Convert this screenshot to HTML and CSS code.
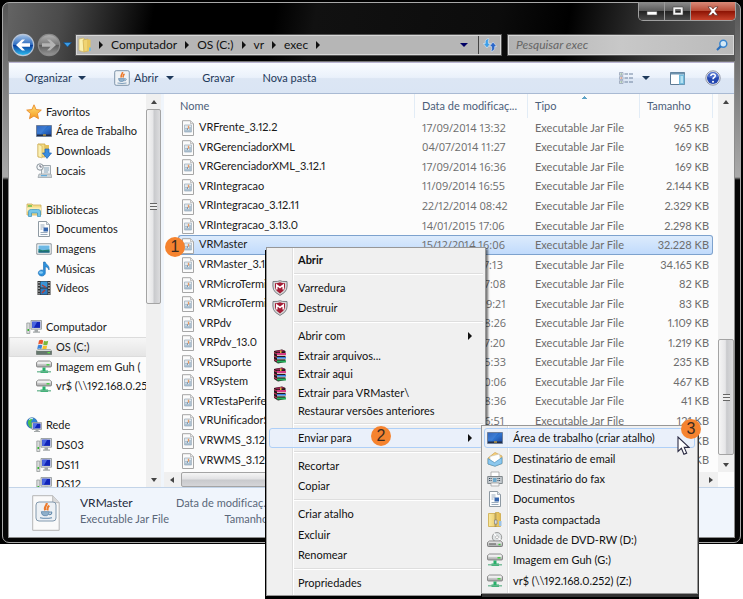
FILE: index.html
```html
<!DOCTYPE html>
<html lang="pt-BR">
<head>
<meta charset="utf-8">
<meta name="viewport" content="width=device-width, initial-scale=1">
<title>exec</title>
<link rel="stylesheet" href="styles.css">
</head>
<body>
<svg class="defs" aria-hidden="true">
  <defs>
    <linearGradient id="gBlue" x1="0" y1="0" x2="0" y2="1"><stop offset="0" stop-color="#a9c6e8"/><stop offset=".48" stop-color="#2d6cc0"/><stop offset=".52" stop-color="#0a3f9e"/><stop offset="1" stop-color="#2fc3f5"/></linearGradient>
    <linearGradient id="gGrey" x1="0" y1="0" x2="0" y2="1"><stop offset="0" stop-color="#b4b4b4"/><stop offset=".5" stop-color="#777"/><stop offset=".52" stop-color="#5c5c5c"/><stop offset="1" stop-color="#9a9a9a"/></linearGradient>
    <linearGradient id="gFold" x1="0" y1="0" x2="1" y2="0"><stop offset="0" stop-color="#f9eaa0"/><stop offset="1" stop-color="#e2b94e"/></linearGradient>
    <linearGradient id="gScr" x1="0" y1="0" x2="1" y2="1"><stop offset="0" stop-color="#14378f"/><stop offset=".5" stop-color="#2f74cf"/><stop offset="1" stop-color="#1a3f93"/></linearGradient>
    <linearGradient id="gStar" x1="0" y1="0" x2="0" y2="1"><stop offset="0" stop-color="#ffe27a"/><stop offset="1" stop-color="#f59a1d"/></linearGradient>
    <linearGradient id="gDrv" x1="0" y1="0" x2="0" y2="1"><stop offset="0" stop-color="#f4f4f4"/><stop offset="1" stop-color="#a4a6a6"/></linearGradient>
  </defs>
  <symbol id="star" viewBox="0 0 16 16"><path d="M8 .8l2.1 4.8 5.2.5-3.9 3.5 1.1 5.1L8 12l-4.500 2.700 1.100-5.100L.7 6.100l5.200-.5z" fill="url(#gStar)" stroke="#e98a2a" stroke-width=".9"/></symbol>
  <symbol id="desk" viewBox="0 0 16 16"><path d="M.5 2.500h15v11H.5z" fill="url(#gScr)" stroke="#6e7f9a"/><path d="M1 3h10.500L5 10.500H1z" fill="#4d8ce0" opacity=".55"/><path d="M1 11.500h14v1.500H1z" fill="#222d46"/><path d="M7 11.500h3v1H7z" fill="#ffc533"/></symbol>
  <symbol id="down" viewBox="0 0 16 16"><path d="M2 1h7v13H2z" fill="#f4dc84" stroke="#caa445" stroke-width=".8"/><path d="M2 1l4 2v12l-4-1.500z" fill="#fbf0b4" stroke="#cfae55" stroke-width=".6"/><path d="M9 2h4v11H9z" fill="#e5c25d"/><path d="M9 6h4v4h2.500L11 15.400 6.500 10H9z" fill="#3a8ee0" stroke="#1d62b3" stroke-width=".7"/></symbol>
  <symbol id="places" viewBox="0 0 16 16"><path d="M5.500 2.500h9v9h-9z" fill="#eceff1" stroke="#a1a9af"/><path d="M8 5h5M8 7h5M8 9h4" stroke="#8ba8bc"/><path d="M3 11h12l.8 3.500H2z" fill="#cdd4d8" stroke="#98a1a6" stroke-width=".7"/><circle cx="4" cy="4" r="3.200" fill="#f4f7f9" stroke="#8b959c"/><path d="M4 2v2h1.800" fill="none" stroke="#667"/><path d="M5 12.700h6" stroke="#4aa3dc"/></symbol>
  <symbol id="lib" viewBox="0 0 16 16"><path d="M1 2h5l1 1h8v10H1z" fill="#f5dd88" stroke="#ccaf5d" stroke-width=".8"/><path d="M2 3h4v2H2z" fill="#8cc35b"/><path d="M1 5.500h14v4H1z" fill="#fbeeb4"/><path d="M2.500 14.500V10c0-2 1-2.500 3-2.500h6c2 0 3 .5 3 2.500v4.500h-3V11h-6v3.500z" fill="#76c6e8" stroke="#3a92bd" stroke-width=".7"/></symbol>
  <symbol id="doc" viewBox="0 0 16 16"><path d="M2.500.5h8l3 3v12h-11z" fill="#fcfdfd" stroke="#8f9aa3"/><path d="M10.500.5v3h3" fill="#dfe6ea" stroke="#8f9aa3" stroke-width=".7"/><path d="M4.500 4h4M4.500 6h4M4.500 8h2M4.500 11.500h7M4.500 13.500h7" stroke="#9bacbd"/><path d="M7.500 6.500h4.500v4H7.500z" fill="#3465ad"/></symbol>
  <symbol id="img" viewBox="0 0 16 16"><path d="M.8 2.800h14.400v10.400H.8z" fill="#fff" stroke="#8b949b"/><path d="M2.500 4.500h11v7h-11z" fill="#6db8e4"/><path d="M2.500 8l4 1.200 7-.7v3h-11z" fill="#24806f"/><path d="M2.500 10.500h11v1h-11z" fill="#1b5a88"/></symbol>
  <symbol id="music" viewBox="0 0 16 16"><path d="M7.500 1h1.700c.5 2.500 4.800 3.500 3.800 8-.6-2-2-3-3.700-3.300V12a3.500 3 0 1 1-1.800-2.600z" fill="#2d92dc" stroke="#1767ae" stroke-width=".6"/><ellipse cx="5" cy="11.500" rx="2" ry="1.300" fill="#86cbf5"/></symbol>
  <symbol id="video" viewBox="0 0 16 16"><path d="M1.500 1h13v14h-13z" fill="#333"/><path d="M4.500 1.500h7v6h-7z" fill="#3a95d6"/><path d="M4.500 8.500h7v6h-7z" fill="#2e7bc0"/><path d="M3 2v13M13 2v13" stroke="#cfd4d6" stroke-width="1.300" stroke-dasharray="1.300 1.500"/><path d="M6 5l4 2.500M6 13l3-3" stroke="#b33d35" stroke-width="1.400"/></symbol>
  <symbol id="pc" viewBox="0 0 16 16"><path d="M.8 4h3v10.500h-3z" fill="#d9dcdc" stroke="#8b9090" stroke-width=".7"/><path d="M1.500 10h1.500v2H1.500z" fill="#35b52d"/><path d="M5 1.500h10.500v8.700H5z" fill="#dcdfe0" stroke="#8c9294" stroke-width=".8"/><path d="M6.200 2.700h8v6.200h-8z" fill="#1024b8"/><path d="M6.200 2.700h5l-3.500 6.200H6.200z" fill="#4966e0"/><path d="M8.500 10.500h3.500v2H14v1.300H7v-1.300h1.500z" fill="#a3a8a9"/></symbol>
  <symbol id="osdrv" viewBox="0 0 16 16"><path d="M3 1.500q2.300-1.300 4.200 0l-.8 4q-2-1.300-4.200 0z" fill="#e8542c"/><path d="M8 1.700q2 1.300 4.200 0l-.8 4q-2 1.200-4.200 0z" fill="#78b83c"/><path d="M2 6.300q2-1.200 4.200 0l-.8 3.700q-2-1.200-4.200 0z" fill="#3b83d8"/><path d="M7 6.500q2 1.200 4.200 0l-.8 3.700q-2 1.300-4.200 0z" fill="#f6c02c"/><path d="M2 10.500h12l1.700 1.500v3.500H.5V12z" fill="#66786d" stroke="#5b655f" stroke-width=".6"/><path d="M2 10.500h12l1.700 1.500H.5z" fill="#d5dad7"/><path d="M11.500 13h2.500v1.300h-2.500z" fill="#5fe048"/></symbol>
  <symbol id="netdrv" viewBox="0 0 16 16"><path d="M.5 3.500l2-1.500h11l2 1.500V7q0 1-1 1h-13q-1 0-1-1z" fill="url(#gDrv)" stroke="#777" stroke-width=".8"/><path d="M1.500 4h13" stroke="#fff"/><path d="M10.500 5.800h3" stroke="#3c3" stroke-width="1.300"/><path d="M6.500 8.500h3v3H12v2.500H4.500v-2.500h2z" fill="#27b06a"/><path d="M1 12.800h14" stroke="#6bb590" stroke-width="1.300"/></symbol>
  <symbol id="net" viewBox="0 0 16 16"><circle cx="6" cy="6" r="5.300" fill="#2d83d8" stroke="#1c5a9e" stroke-width=".6"/><path d="M2 4q3-4 5-2.500L5 5l2 3-2 3q-2-1-3-4z" fill="#4cc04c"/><path d="M3 2.500q2-1.500 4-.8" stroke="#d4f0ff" fill="none"/><path d="M6 5.500h9.500v7H6z" fill="#dcdfe0" stroke="#8c9294" stroke-width=".7"/><path d="M7 6.500h7.500v5H7z" fill="#1024b8"/><path d="M7 6.500h4.500l-3 5H7z" fill="#5271e8"/><path d="M9.500 12.500h3v1.500h1.500v1H8v-1h1.500z" fill="#a3a8a9"/></symbol>
  <symbol id="cup" viewBox="0 0 12 12"><path d="M6.500 0C7 2 4 2.700 5.500 5.500M8.500 2C6.500 3.200 7.500 4 7 5.500" fill="none" stroke="#ec7a2c" stroke-width="1.600"/><path d="M2.500 6.500h6q0 2.500-2 3H4.500q-2-.3-2-3z" fill="#8fb0cb" stroke="#5f87aa" stroke-width=".6"/><path d="M8.700 7q2-.7 1.500.7t-2 1M1.500 11q4.500 1 9 0" fill="none" stroke="#5f87aa" stroke-width=".8"/></symbol>
  <symbol id="jar" viewBox="0 0 12 16"><path d="M.5.7h8l3 3v11.800H.5z" fill="#fbfbfb" stroke="#a6a6a6"/><path d="M8.500.7v3h3" fill="#e6e6e6" stroke="#aaa" stroke-width=".7"/><path d="M2.500 5h7v7h-7z" fill="#e2e9ee" stroke="#a3b3c0" stroke-width=".8"/><path d="M3 11h6M4 9.500V8M5.500 10V8M8 10V7" stroke="#7d9bb5"/><path d="M6.500 5.700v3" stroke="#e59a66" stroke-width="1.300"/></symbol>
  <symbol id="jarbig" viewBox="0 0 28 36"><path d="M.7.7h20l6.500 7v27.600H.7z" fill="#fafafa" stroke="#b5b5b5"/><path d="M20.700.7v7h6.500" fill="#d9d9d9" stroke="#bbb"/><rect x="4" y="7" width="20" height="19" rx="3" fill="#edf1f5" stroke="#8299ae"/></symbol>
  <symbol id="java" viewBox="0 0 16 16"><rect x=".7" y=".7" width="14.600" height="14.600" rx="1.500" fill="#eef2f6" stroke="#7e94aa"/></symbol>
  <symbol id="mail" viewBox="0 0 16 16"><path d="M1 7l7-5.500L15 5v7.500L8 15 1 13z" fill="#fbd27a" stroke="#c79d50" stroke-width=".7"/><path d="M3 5.500L12.500 3l1 6.500L8 12 3 9z" fill="#fff" stroke="#bbb" stroke-width=".5"/><path d="M1 7.500l6.500 4.200L15 6.500v6L8 15.300 1 13z" fill="#8cc8ee" stroke="#4c92c4" stroke-width=".7"/></symbol>
  <symbol id="fax" viewBox="0 0 16 16"><path d="M4 1h8v5H4z" fill="#fff" stroke="#999" stroke-width=".7"/><path d="M.7 5.500h14.600v7H.7z" fill="#c6ccd0" stroke="#6b7379" stroke-width=".8"/><path d="M2 7.500h3M2 9.500h3M10.500 7.500h3M10.500 9.500h3" stroke="#374a5c" stroke-dasharray="1 .6"/><path d="M6 7h3.500v4H6z" fill="#6da9cc"/><path d="M4 12h8v3H4z" fill="#f8f8f8" stroke="#999" stroke-width=".7"/></symbol>
  <symbol id="zip" viewBox="0 0 16 16"><path d="M1.500 1.500h6l1-1h3.500l.5 1h1v13h-12z" fill="url(#gFold)" stroke="#cda947" stroke-width=".8"/><path d="M8.500 1.500v13" stroke="#8b7a44" stroke-width="2" stroke-dasharray="1 1"/><path d="M7.500 8h2.500v4H7.500z" fill="#d9dcdf" stroke="#777" stroke-width=".6"/><path d="M12 9h2.500v5H12z" fill="#9cc3e6"/></symbol>
  <symbol id="dvd" viewBox="0 0 16 16"><circle cx="10" cy="5.200" r="4.700" fill="#dfe3e4" stroke="#888" stroke-width=".8"/><path d="M10 5L7 1.500M10 5l3.500 3" stroke="#fff" stroke-width="1.200"/><circle cx="10" cy="5.200" r="1.500" fill="#fff" stroke="#999" stroke-width=".6"/><path d="M.5 10.500l2-1.500h11l2 1.500v3q0 1-1 1h-13q-1 0-1-1z" fill="url(#gDrv)" stroke="#6c6c6c" stroke-width=".8"/><path d="M2 12h7" stroke="#555"/><path d="M11.500 12.500h2" stroke="#3c3" stroke-width="1.300"/></symbol>
  <symbol id="shield" viewBox="0 0 16 16"><path d="M8 .7q1.500 1 7 .8.500 5-.5 8T8 15.400Q2.500 12.500 1.500 9.500t-.5-8Q6.500 1.700 8 .7z" fill="#d8d8d8" stroke="#70757a" stroke-width=".9"/><path d="M3 3.200q3 0 5-1 2 1 5 1 .300 4-.6 6T8 13.500Q4.500 11.300 3.600 9.200T3 3.200z" fill="#a31d35"/><path d="M4.800 9.500V5L8 7.500 11.200 5v4.500" fill="none" stroke="#fff" stroke-width="1.500"/></symbol>
  <symbol id="rar" viewBox="0 0 16 16"><path d="M2 3l8-1.500 3.500 1.500v11L6 15.500 2 13z" fill="#261c1c"/><path d="M2.500 3l7.500-1.200 3 1.200L6 4.500z" fill="#9a2350"/><path d="M5 5h9v2.500H5z" fill="#d83a86"/><path d="M5 9h9v2H5z" fill="#2f7ee0"/><path d="M5 12.500h9v2H5z" fill="#25b45c"/><path d="M5 7.500h9M5 11h9" stroke="#efe6d8" stroke-width=".8"/><path d="M2 4.500l3 1.500M2 8l3 1.500M2 11.500l3 1.500" stroke="#b8325b" stroke-width="1.200"/><path d="M8 2.500h1.500V5H8z" fill="#e0b040"/></symbol>
  <symbol id="folder" viewBox="0 0 14 16"><path d="M1 2l5-1v14l-5-1.500z" fill="#faf0b0" stroke="#d2b354" stroke-width=".6"/><path d="M5 3l5-1v12l-4 1z" fill="#f0d472" stroke="#caa748" stroke-width=".6"/><path d="M9.500 2.500h3v11l-3 1z" fill="#e7c65c"/><path d="M11 10.500h2v3.500h-2z" fill="#7ab8d8"/></symbol>
  <symbol id="refresh" viewBox="0 0 14 14"><path d="M5.500.5Q1.500 1.500 2.300 5.500H.3L4 10l3.500-4.500H5.500Q4.800 3 6 .8z" fill="#3f9fe8" stroke="#e4eff8" stroke-width=".6"/><path d="M8.300 13.500q4-1 3.400-5h2L10 4 6.500 8.500h2q.7 2.500-.5 4.700z" fill="#2b67c8" stroke="#e4eff8" stroke-width=".6"/></symbol>
  <symbol id="search" viewBox="0 0 12 12"><circle cx="7.300" cy="4.700" r="3.500" fill="#d4e9f7" stroke="#3a86cf" stroke-width="1.500"/><path d="M4.800 7.300L1 11" stroke="#2a6fbe" stroke-width="2.200"/></symbol>
  <symbol id="views" viewBox="0 0 14 12"><path d="M.5.500h3.500v2.800H.5zM.5 4.600h3.500v2.800H.5zM.5 8.700h3.500v2.800H.5z" fill="#f0f3f8" stroke="#8a97ad" stroke-width=".7"/><path d="M1.500 2h1.500M1.500 10h1.500" stroke="#6d9c6d"/><path d="M1.500 6h1.500" stroke="#d8683a"/><path d="M5.500 2h3.500M10 2h4M5.500 6h3.500M10 6h4M5.500 10h3.500M10 10h4" stroke="#6e819d" stroke-width="1.200"/></symbol>
  <symbol id="preview" viewBox="0 0 15 13"><path d="M.5.5h14v12H.5z" fill="#fff" stroke="#5d7a94"/><path d="M.5.500h14v2H.5z" fill="#6e93af"/><path d="M9 2.500h5.500v10H9z" fill="#74bbdc"/><path d="M10.500 4h2.500v7h-2.500z" fill="#b5e1f2"/></symbol>
  <symbol id="help" viewBox="0 0 16 16"><circle cx="8" cy="8" r="7.200" fill="#e8eaf2" stroke="#7a7f8f" stroke-width=".8"/><circle cx="8" cy="8" r="6" fill="#2447b0"/><path d="M2.500 7a5.500 5 0 0 1 11 0q-5 2-11 0z" fill="#6c8be0" opacity=".6"/><path d="M5.800 6q.2-2 2.300-2t2.200 1.800q0 1-1.200 1.700T8 9.300" fill="none" stroke="#fff" stroke-width="1.500"/><circle cx="8" cy="11.700" r="1" fill="#fff"/></symbol>
</svg>

<div class="screen">
  <div class="backdrop">
  <div class="window">
    <div class="caption-buttons">
      <button aria-label="Minimizar"><svg width="12" height="10" viewBox="0 0 12 10"><path d="M1 5.500h10v3.500H1z" fill="#fff" stroke="#555" stroke-width=".6"/></svg></button>
      <button aria-label="Maximizar"><svg width="12" height="10" viewBox="0 0 12 10"><path d="M1 1h10v8H1zM3.500 3.500h5v3h-5z" fill="#f4f4f4" fill-rule="evenodd" stroke="#444" stroke-width=".6"/></svg></button>
      <button class="close" aria-label="Fechar"><svg width="12" height="10" viewBox="0 0 12 10"><path d="M1 .8h3.200L6 3l1.800-2.200H11L7.800 5 11 9.200H7.800L6 7 4.200 9.200H1L4.200 5z" fill="#fff" stroke="#5c2a24" stroke-width=".7"/></svg></button>
    </div>

    <header class="nav-row">
      <div class="travel">
        <button aria-label="Voltar"><svg width="24" height="24" viewBox="0 0 24 24"><circle cx="12" cy="12" r="10.700" fill="url(#gBlue)" stroke="#b9c5d6" stroke-width="1.200"/><path d="M5 12l6-5.500h3L10.500 10.300H19v3.400h-8.500l3.500 3.800h-3z" fill="#fff"/></svg></button>
        <button aria-label="Avançar"><svg width="24" height="24" viewBox="0 0 24 24"><circle cx="12" cy="12" r="10.700" fill="url(#gGrey)" stroke="#8b8b8b" stroke-width="1.200"/><path d="M19 12l-6-5.500h-3l3.500 3.800H5v3.400h8.500L10 17.500h3z" fill="#b4b4b4"/></svg></button>
        <button aria-label="Páginas recentes"><svg width="9" height="6" viewBox="0 0 9 6"><path d="M.5.500h8L4.500 5z" fill="#3b9be4" stroke="#0e4d8c" stroke-width=".6"/></svg></button>
      </div>
      <nav class="address" aria-label="Endereço">
        <svg class="fold" width="14" height="16"><use href="#folder"/></svg>
        <i class="tri"></i><a href="#">Computador</a>
        <i class="tri"></i><a href="#">OS (C:)</a>
        <i class="tri"></i><a href="#">vr</a>
        <i class="tri"></i><a href="#">exec</a>
        <i class="tri"></i>
        <button class="drop" aria-label="Locais anteriores"><i class="caret navy"></i></button>
        <button class="reload" aria-label="Atualizar"><svg width="14" height="14"><use href="#refresh"/></svg></button>
      </nav>
      <label class="search"><input type="text" placeholder="Pesquisar exec" aria-label="Pesquisar exec"><svg width="12" height="12"><use href="#search"/></svg></label>
    </header>

    <div class="client">
      <div class="toolbar">
        <button>Organizar <i class="caret"></i></button>
        <button class="open"><span class="stack"><svg width="16" height="16"><use href="#java"/></svg><svg class="cup" width="12" height="12"><use href="#cup"/></svg></span>Abrir <i class="caret"></i></button>
        <button>Gravar</button>
        <button>Nova pasta</button>
        <div class="tools">
          <button aria-label="Modo de exibição"><svg width="14" height="12"><use href="#views"/></svg><i class="caret"></i></button>
          <button aria-label="Painel de visualização"><svg width="15" height="13"><use href="#preview"/></svg></button>
          <button aria-label="Ajuda"><svg width="16" height="16"><use href="#help"/></svg></button>
        </div>
      </div>

      <div class="panes">
        <nav class="tree" aria-label="Pastas">
          <ul>
            <li class="root"><a href="#"><svg><use href="#star"/></svg>Favoritos</a></li>
            <li><a href="#"><svg><use href="#desk"/></svg>Área de Trabalho</a></li>
            <li><a href="#"><svg><use href="#down"/></svg>Downloads</a></li>
            <li><a href="#"><svg><use href="#places"/></svg>Locais</a></li>
            <li class="gap"></li>
            <li class="root"><a href="#"><svg><use href="#lib"/></svg>Bibliotecas</a></li>
            <li><a href="#"><svg><use href="#doc"/></svg>Documentos</a></li>
            <li><a href="#"><svg><use href="#img"/></svg>Imagens</a></li>
            <li><a href="#"><svg><use href="#music"/></svg>Músicas</a></li>
            <li><a href="#"><svg><use href="#video"/></svg>Vídeos</a></li>
            <li class="gap"></li>
            <li class="root"><a href="#"><svg><use href="#pc"/></svg>Computador</a></li>
            <li class="current"><a href="#"><svg><use href="#osdrv"/></svg>OS (C:)</a></li>
            <li><a href="#"><svg><use href="#netdrv"/></svg>Imagem em Guh (</a></li>
            <li><a href="#"><svg><use href="#netdrv"/></svg>vr$ (\\192.168.0.25</a></li>
            <li class="gap"></li>
            <li class="root"><a href="#"><svg><use href="#net"/></svg>Rede</a></li>
            <li><a href="#"><svg><use href="#pc"/></svg>DS03</a></li>
            <li><a href="#"><svg><use href="#pc"/></svg>DS11</a></li>
            <li><a href="#"><svg><use href="#pc"/></svg>DS12</a></li>
          </ul>
        </nav>
        <div class="vscroll left"><i class="arrow up"></i><div class="thumb"><i class="grip"></i></div><i class="arrow dn"></i></div>

        <main class="files">
          <div class="list">
            <table>
              <colgroup><col><col class="c-date"><col class="c-type"><col class="c-size"></colgroup>
              <thead><tr><th>Nome</th><th>Data de modificaç...</th><th class="sorted">Tipo</th><th>Tamanho</th></tr></thead>
              <tbody>
                <tr><td><svg><use href="#jar"/></svg>VRFrente_3.12.2</td><td>17/09/2014 13:32</td><td>Executable Jar File</td><td>965 KB</td></tr>
                <tr><td><svg><use href="#jar"/></svg>VRGerenciadorXML</td><td>04/07/2014 11:27</td><td>Executable Jar File</td><td>169 KB</td></tr>
                <tr><td><svg><use href="#jar"/></svg>VRGerenciadorXML_3.12.1</td><td>17/09/2014 16:36</td><td>Executable Jar File</td><td>169 KB</td></tr>
                <tr><td><svg><use href="#jar"/></svg>VRIntegracao</td><td>11/09/2014 16:55</td><td>Executable Jar File</td><td>2.144 KB</td></tr>
                <tr><td><svg><use href="#jar"/></svg>VRIntegracao_3.12.11</td><td>22/12/2014 08:42</td><td>Executable Jar File</td><td>2.329 KB</td></tr>
                <tr><td><svg><use href="#jar"/></svg>VRIntegracao_3.13.0</td><td>14/01/2015 17:06</td><td>Executable Jar File</td><td>2.298 KB</td></tr>
                <tr class="selected"><td><svg><use href="#jar"/></svg>VRMaster</td><td>15/12/2014 16:06</td><td>Executable Jar File</td><td>32.228 KB</td></tr>
                <tr><td><svg><use href="#jar"/></svg>VRMaster_3.13.0</td><td>14/01/2015 17:13</td><td>Executable Jar File</td><td>34.165 KB</td></tr>
                <tr><td><svg><use href="#jar"/></svg>VRMicroTerminal</td><td>17/09/2014 17:08</td><td>Executable Jar File</td><td>82 KB</td></tr>
                <tr><td><svg><use href="#jar"/></svg>VRMicroTerminal_3</td><td>17/09/2014 09:21</td><td>Executable Jar File</td><td>83 KB</td></tr>
                <tr><td><svg><use href="#jar"/></svg>VRPdv</td><td>17/09/2014 18:26</td><td>Executable Jar File</td><td>1.109 KB</td></tr>
                <tr><td><svg><use href="#jar"/></svg>VRPdv_13.0</td><td>17/09/2014 17:20</td><td>Executable Jar File</td><td>1.219 KB</td></tr>
                <tr><td><svg><use href="#jar"/></svg>VRSuporte</td><td>17/09/2014 15:33</td><td>Executable Jar File</td><td>235 KB</td></tr>
                <tr><td><svg><use href="#jar"/></svg>VRSystem</td><td>17/09/2014 10:06</td><td>Executable Jar File</td><td>467 KB</td></tr>
                <tr><td><svg><use href="#jar"/></svg>VRTestaPeriferico</td><td>17/09/2014 18:36</td><td>Executable Jar File</td><td>41 KB</td></tr>
                <tr><td><svg><use href="#jar"/></svg>VRUnificadorSped</td><td>17/09/2014 16:51</td><td>Executable Jar File</td><td>121 KB</td></tr>
                <tr><td><svg><use href="#jar"/></svg>VRWMS_3.12.6</td><td>17/09/2014 16:51</td><td>Executable Jar File</td><td>121 KB</td></tr>
                <tr><td><svg><use href="#jar"/></svg>VRWMS_3.12.7</td><td>17/09/2014 16:51</td><td>Executable Jar File</td><td>121 KB</td></tr>
              </tbody>
            </table>
            <div class="vscroll right"><i class="arrow up"></i><div class="thumb"><i class="grip"></i></div><i class="arrow dn"></i></div>
          </div>
          <div class="hscroll"><i class="arrow lf"></i><div class="thumb"></div><i class="arrow rt"></i></div>
        </main>
      </div>

      <footer class="details">
        <span class="stack"><svg width="28" height="36"><use href="#jarbig"/></svg><svg class="cup" width="16" height="16"><use href="#cup"/></svg></span>
        <div class="what"><strong>VRMaster</strong><span>Executable Jar File</span></div>
        <div class="labels"><span>Data de modificaç...</span><span>Tamanho:</span></div>
      </footer>
    </div>
  </div>
  </div>

  <div class="menu context" role="menu">
    <button class="strong">Abrir</button>
    <hr>
    <button><svg><use href="#shield"/></svg>Varredura</button>
    <button><svg><use href="#shield"/></svg>Destruir</button>
    <hr>
    <button>Abrir com<i class="tri"></i></button>
    <button class="short"><svg><use href="#rar"/></svg>Extrair arquivos...</button>
    <button class="short"><svg><use href="#rar"/></svg>Extrair aqui</button>
    <button class="short"><svg><use href="#rar"/></svg>Extrair para VRMaster\</button>
    <button class="short">Restaurar versões anteriores</button>
    <hr>
    <button class="hot">Enviar para<i class="tri"></i></button>
    <hr>
    <button>Recortar</button>
    <button>Copiar</button>
    <hr>
    <button>Criar atalho</button>
    <button>Excluir</button>
    <button>Renomear</button>
    <hr>
    <button>Propriedades</button>
  </div>

  <div class="menu sendto" role="menu">
    <button class="hot"><svg><use href="#desk"/></svg>Área de trabalho (criar atalho)</button>
    <button><svg><use href="#mail"/></svg>Destinatário de email</button>
    <button><svg><use href="#fax"/></svg>Destinatário do fax</button>
    <button><svg><use href="#doc"/></svg>Documentos</button>
    <button><svg><use href="#zip"/></svg>Pasta compactada</button>
    <button><svg><use href="#dvd"/></svg>Unidade de DVD-RW (D:)</button>
    <button><svg><use href="#netdrv"/></svg>Imagem em Guh (G:)</button>
    <button><svg><use href="#netdrv"/></svg>vr$ (\\192.168.0.252) (Z:)</button>
  </div>

  <span class="badge one">1</span>
  <span class="badge two">2</span>
  <span class="badge three">3</span>
  <svg class="cursor" width="13" height="20" viewBox="0 0 13 20"><path d="M1 1v14.500l3.400-3.200 2.500 6 2.800-1.200-2.500-5.700H12z" fill="#fff" stroke="#2c2c44" stroke-width="1.100"/></svg>
</div>
</body>
</html>
```
FILE: styles.css
```css
* { box-sizing: border-box; }

body {
  margin: 0;
  background: #fff;
  color: #1a1a1a;
  font: 11px/16px Lato, "Open Sans", sans-serif;
  font-variant-ligatures: none;
  font-variant-numeric: proportional-nums;
}

ul { margin: 0; padding: 0; list-style: none; }
a { color: inherit; text-decoration: none; }
button {
  margin: 0;
  padding: 0;
  border: 0;
  background: none;
  color: inherit;
  font: inherit;
  font-variant-ligatures: none;
  font-variant-numeric: proportional-nums;
}
svg { display: block; flex: none; }
.defs { position: absolute; width: 0; height: 0; }

.screen {
  position: relative;
  min-height: 100vh;
}
.backdrop {
  padding: 2px 2px 1px;
  background: #000;
}

/* Window frame */
.window {
  position: relative;
  padding: 31px 5px 4px;
  border: 1px solid #a8a8a8;
  border-radius: 7px;
  background:
    linear-gradient(to bottom, #555, #aaa 174px, transparent 177px) left 0 top 0 / 5px 100% no-repeat,
    linear-gradient(to bottom, #555, #aaa 174px, transparent 177px) right 0 top 0 / 5px 100% no-repeat,
    linear-gradient(100deg, #666 0, #4a4a4a 60px, #000 150px, #000 270px, #111 310px, #0c0c0c 490px, #000 560px, #333 640px, #5a5a5a) 0 0 / 100% 80px no-repeat,
    #060606;
}

.caption-buttons {
  position: absolute;
  top: -1px;
  right: 4px;
  display: flex;
  border: 1px solid #a0a0a0;
  border-top: 0;
  border-radius: 0 0 5px 5px;
  overflow: hidden;
}
.caption-buttons button {
  display: grid;
  place-items: center;
  width: 26px;
  height: 18px;
  border-right: 1px solid #999;
  background: linear-gradient(#8c8c8c, #5a5a5a 50%, #222 52%, #4b4b4b);
}
.caption-buttons .close {
  width: 44px;
  border: 0;
  background: linear-gradient(#d98a78, #b84a35 50%, #8e1404 52%, #c8432c);
}

.nav-row { display: flex; align-items: center; height: 21px; }
.travel {
  display: flex;
  align-items: center;
  gap: 2px;
  width: 62px;
  margin: 0 3px 0 3px;
}

.address, .search {
  display: flex;
  align-items: center;
  height: 20px;
  border: 1px solid #d8d8d8;
  outline: 1px solid #555;
  background: #b6b6b6;
}
.address { flex: 1; gap: 8px; padding-left: 1px; color: #111; font-size: 12px; }
.address .fold { margin-right: -1px; }
.tri {
  width: 0;
  height: 0;
  border: solid transparent;
  border-width: 4px 0 4px 4px;
  border-left-color: #111;
}
.drop { margin-left: auto; padding: 0 2px; }
.drop .caret { display: block; }
.reload {
  display: grid;
  place-items: center;
  width: 22px;
  height: 18px;
  border-left: 1px solid #444;
}
.search { width: 226px; margin: 0 1px 0 7px; padding: 0 5px 0 7px; background: linear-gradient(90deg, #b2b2b2, #c8c8c8 50%, #bbb); }
.search input {
  flex: 1;
  min-width: 0;
  padding: 0;
  border: 0;
  outline: 0;
  background: none;
  font: italic 12px Lato, "Open Sans", sans-serif;
}
.search input::placeholder { color: #666; opacity: 1; }

.caret {
  display: inline-block;
  border: solid transparent;
  border-width: 4px 4px 0;
  border-top-color: #1e395b;
}
.caret.navy { border-top-color: #000064; }

/* Client area */
.client {
  margin-top: 6px;
  border: 1px solid #8d8d8d;
  border-top-color: #777;
  background: #fcfcfc;
}

.toolbar {
  display: flex;
  align-items: center;
  gap: 28px;
  height: 32px;
  padding: 0 13px 0 16px;
  border-top: 1px solid #b9b4d2;
  border-bottom: 1px solid #a9bad3;
  background: linear-gradient(#fafcff, #eaf1fb 48%, #dce6f4 52%, #dae5f4);
  color: #1e395b;
}
.toolbar button { display: flex; align-items: center; gap: 6px; }
.toolbar .open { gap: 4px; }
.open .caret { margin-left: 4px; }
.stack { display: grid; place-items: center; flex: none; }
.stack > svg { grid-area: 1 / 1; }
.tools { display: flex; align-items: center; gap: 20px; margin-left: auto; }
.tools button:first-child { gap: 9px; }

.panes { display: flex; height: 393px; }

.tree { width: 137px; padding-top: 8px; overflow: hidden; }
.tree ul { display: grid; grid-template-rows: repeat(20, 1fr); height: 392px; }
.tree a {
  display: flex;
  align-items: center;
  gap: 4px;
  height: 100%;
  padding-left: 27px;
  white-space: nowrap;
}
.tree .root a { padding-left: 17px; }
.tree svg { width: 16px; height: 16px; }
.tree .current { background: linear-gradient(#f7f7f7, #e4e4e4); box-shadow: inset 0 0 0 1px #dcdcdc; }

.vscroll {
  display: flex;
  flex-direction: column;
  flex: none;
  width: 15px;
  background: #f0f0f0;
}
.vscroll.right { width: 16px; }
.vscroll .arrow, .hscroll .arrow { flex: none; width: 15px; height: 15px; display: grid; place-items: center; }
.arrow::before { content: ""; border: 3px solid transparent; }
.up::before { border-bottom: 4px solid #444; border-top: 0; }
.dn::before { border-top: 4px solid #444; border-bottom: 0; }
.lf::before { border-right: 4px solid #444; border-left: 0; }
.rt::before { border-left: 4px solid #444; border-right: 0; }
.thumb {
  display: grid;
  place-items: center;
  border: 1px solid #a4a4a4;
  border-radius: 2px;
  background: linear-gradient(90deg, #f5f5f5, #e6e6e8 45%, #c9cacd 55%, #dcdcde);
}
.grip {
  width: 7px;
  height: 7px;
  background: repeating-linear-gradient(#666 0 1px, #eee 1px 3px);
}
.left .thumb { height: 195px; }
.left .dn, .right .dn { margin-top: auto; }
.right .thumb { height: 116px; margin-top: auto; }
.right .dn { margin-top: 2px; }

.files {
  display: flex;
  flex: 1;
  flex-direction: column;
  min-width: 0;
  border-left: 3px solid #f0f5fb;
}
.list { display: flex; flex: 1; min-height: 0; }
.list table {
  flex: 1;
  height: 376px;
  margin: 0 5px 0 14px;
  border-collapse: separate;
  border-spacing: 0;
  table-layout: fixed;
}
.c-date { width: 113px; }
.c-type { width: 112px; }
.c-size { width: 73px; }
th {
  height: 24px;
  padding: 0 0 0 7px;
  border-right: 1px solid #e2ecf6;
  color: #4c607a;
  font-weight: 400;
  text-align: left;
  white-space: nowrap;
}
th:first-child { padding-left: 2px; }
.sorted {
  background: conic-gradient(from 135deg at 50% 0, #5fa3c6 90deg, transparent 0) 53px 2px / 7px 3px no-repeat;
}
td {
  padding: 0 0 0 7px;
  border: solid transparent;
  border-width: 1px 0;
  color: #6d6d6d;
  line-height: 14px;
  white-space: nowrap;
  overflow: hidden;
}
td:first-child { padding-left: 4px; color: #1a1a1a; }
td:nth-child(2) { font-family: "Open Sans", sans-serif; }
td:last-child { padding-right: 4px; text-align: right; }
td svg { display: inline-block; width: 12px; height: 16px; margin: -1px 5px -1px 0; vertical-align: middle; }
.selected td { border-color: #7da2ce; background: linear-gradient(#dcebfc, #c1dbfc); }
.selected td:first-child { border-left: 1px solid #7da2ce; border-radius: 3px 0 0 3px; padding-left: 3px; }
.selected td:last-child { border-right: 1px solid #7da2ce; border-radius: 0 3px 3px 0; padding-right: 3px; }

.hscroll { display: flex; width: calc(100% - 16px); height: 15px; background: #f0f0f0; }
.hscroll .thumb { width: 420px; margin-left: 2px; background: linear-gradient(#f5f5f5, #e2e2e4 45%, #c9cacd 55%, #d5d5d8); }
.hscroll .rt { margin-left: auto; }

.details {
  display: flex;
  align-items: flex-start;
  height: 50px;
  padding: 7px 0 0 23px;
  border-top: 1px solid #c3d4e8;
  background: #f0f5fc;
  color: #5a6779;
}
.details .cup { margin-top: -5px; }
.what { width: 96px; margin-left: 20px; white-space: nowrap; }
.what > *, .labels > * { display: block; }
.what strong { color: #1e2a3c; font-size: 12px; font-weight: 400; }
.labels { text-align: right; }

/* Menus */
.menu {
  position: absolute;
  display: flex;
  flex-direction: column;
  padding: 2px;
  border: 1px solid #979797;
  background: linear-gradient(90deg, transparent 25px, #dedede 25px 26px, #fff 26px 27px, transparent 27px) #f0f0f0;
  color: #111;
}
.menu button {
  display: flex;
  flex: 20 1 0;
  align-items: center;
  border: 1px solid transparent;
  border-radius: 3px;
  padding: 0 10px 0 28px;
  line-height: 14px;
  white-space: nowrap;
}
.menu .short { flex-grow: 18; }
.menu button svg { width: 16px; height: 16px; margin: 0 10px 0 -26px; }
.menu .strong { font-weight: 700; }
.menu .tri { margin-left: auto; }
.menu .hot { border-color: #aecff7; background: rgba(232, 240, 252, .8); }
.menu hr {
  flex: 8 1 0;
  width: calc(100% - 25px);
  margin: 0 0 0 25px;
  border: 0;
  background: linear-gradient(#dedede 50%, #fff 50%) center / 100% 2px no-repeat;
}
.context { left: 266px; top: 247px; width: 220px; height: 349px; box-shadow: 0 3px 0 #000, -1px 3px 0 #000, 2px 2px 2px #0008; }
.sendto { left: 481px; top: 425px; width: 217px; height: 169px; box-shadow: 1px 3px 0 #333, 0 5px 0 #000, 1px 5px 0 #000; }

.badge {
  position: absolute;
  width: 20px;
  height: 20px;
  border-radius: 50%;
  background: #f5832f;
  color: #3c2b20;
  font: 16px/20px "Liberation Sans", sans-serif;
  text-align: center;
}
.one { left: 165px; top: 237px; }
.two { left: 371px; top: 426px; }
.three { left: 681px; top: 419px; }
.cursor { position: absolute; left: 677px; top: 436px; }
```
